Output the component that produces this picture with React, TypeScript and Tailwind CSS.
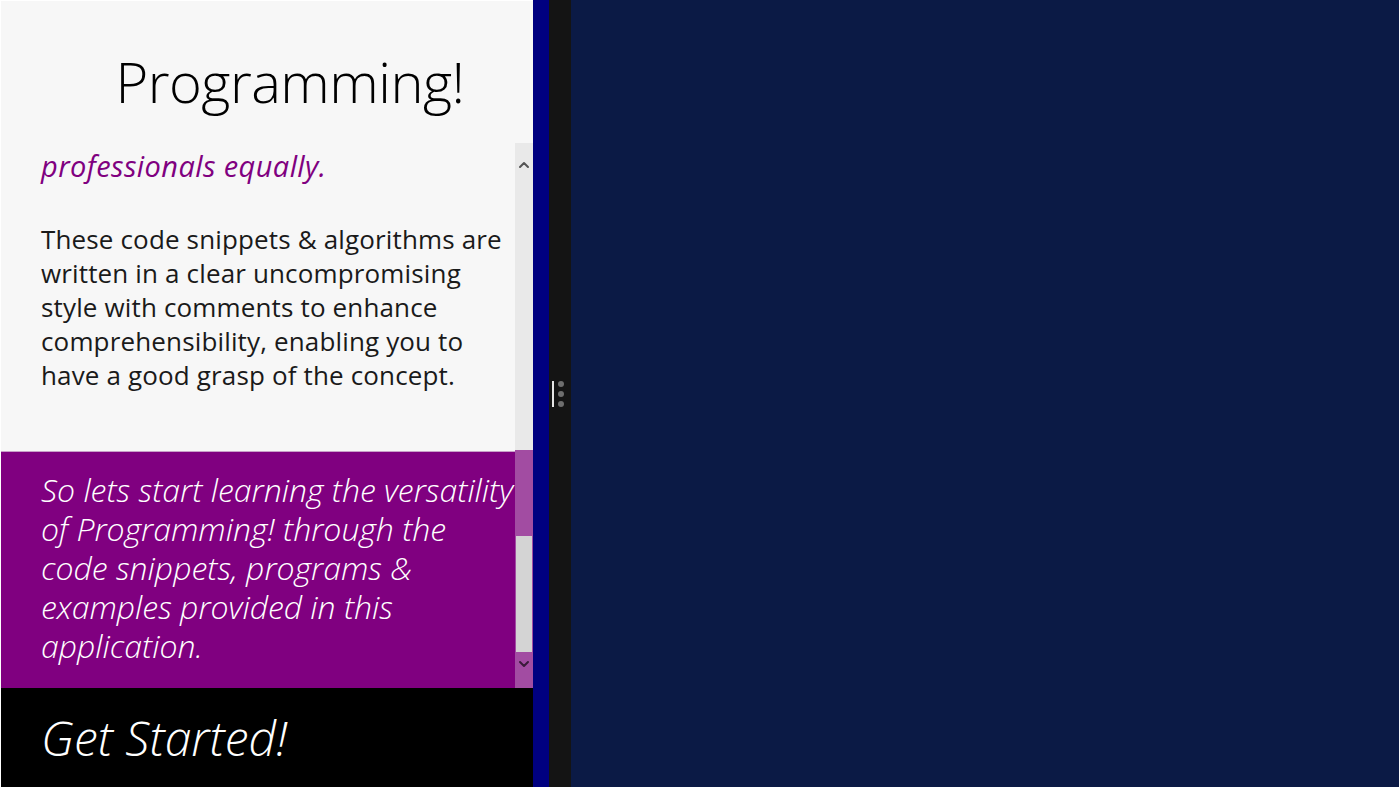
import { ChevronUp, ChevronDown } from 'lucide-react';

const font = { fontFamily: '"Open Sans", "Noto Sans", sans-serif' };

export default function App() {
  const body = [
    'These code snippets & algorithms are',
    'written in a clear uncompromising',
    'style with comments to enhance',
    'comprehensibility, enabling you to',
    'have a good grasp of the concept.',
  ];
  const outro = [
    'So lets start learning the versatility',
    'of Programming! through the',
    'code snippets, programs &',
    'examples provided in this',
    'application.',
  ];

  return (
    <div className="flex h-[787px] w-[1399px] overflow-hidden" style={font}>
      {/* snapped app */}
      <div className="flex w-[533px] flex-col border-l border-t border-white bg-[#f7f7f7]">
        <div className="flex h-[142px] shrink-0 justify-center pt-[40px]">
          <h1 className="pl-[46px] text-[56px] font-light leading-[80px] tracking-[-0.5px] text-black">Programming!</h1>
        </div>

        <div className="relative flex-1 overflow-hidden">
          <div className="flex flex-col">
            <div className="mt-[-38px] px-[40px] text-[29px] italic leading-[40px] tracking-[0.4px] text-[#800080] whitespace-nowrap">
              <div>are helpful to beginners &amp;</div>
              <div className="mt-[1px]">professionals equally.</div>
            </div>

            <div className="mt-[36px] px-[40px] text-[26px] leading-[34px] tracking-[0.15px] text-[#1a1a1a] whitespace-nowrap">
              {body.map((l) => (
                <div key={l}>{l}</div>
              ))}
            </div>

            <div className="mt-[59px] h-[237px] border-t border-[#c9a0c9] bg-[#800080] px-[40px] pt-[18px] text-[32px] font-light italic leading-[39px] text-white whitespace-nowrap">
              {outro.map((l) => (
                <div key={l}>{l}</div>
              ))}
            </div>
          </div>

          {/* scrollbar */}
          <div className="absolute right-0 top-0 flex h-full w-[18px] flex-col">
            <div className="flex h-[307px] flex-col items-center bg-[#e9e9e9] pt-[14px]">
              <ChevronUp className="h-[16px] w-[16px] text-[#555555]" strokeWidth={3} />
            </div>
            <div className="h-[85px] bg-[#a24ca2]" />
            <div className="h-[118px] border border-[#a24ca2] bg-[#d4d4d4]" />
            <div className="flex flex-1 justify-center bg-[#a24ca2] pt-[3px]">
              <ChevronDown className="h-[16px] w-[16px] text-[#3a1a3a]" strokeWidth={3} />
            </div>
          </div>
        </div>

        <div className="flex h-[99px] shrink-0 items-center bg-black px-[40px]">
          <span className="text-[48px] font-light italic leading-none text-white">Get Started!</span>
        </div>
      </div>

      {/* split divider */}
      <div className="w-[16px] bg-[#000080]" />
      <div className="flex w-[22px] items-center bg-[#141414]">
        <div className="flex items-center gap-[4px] pl-[3px]">
          <div className="h-[26px] w-[2px] bg-[#e5e5e5]" />
          <div className="flex flex-col gap-[4px]">
            <div className="h-[6px] w-[6px] rounded-full bg-[#6e6e6e]" />
            <div className="h-[6px] w-[6px] rounded-full bg-[#6e6e6e]" />
            <div className="h-[6px] w-[6px] rounded-full bg-[#6e6e6e]" />
          </div>
        </div>
      </div>

      {/* main screen */}
      <div className="flex-1 bg-[#0b1a45]" />
    </div>
  );
}
